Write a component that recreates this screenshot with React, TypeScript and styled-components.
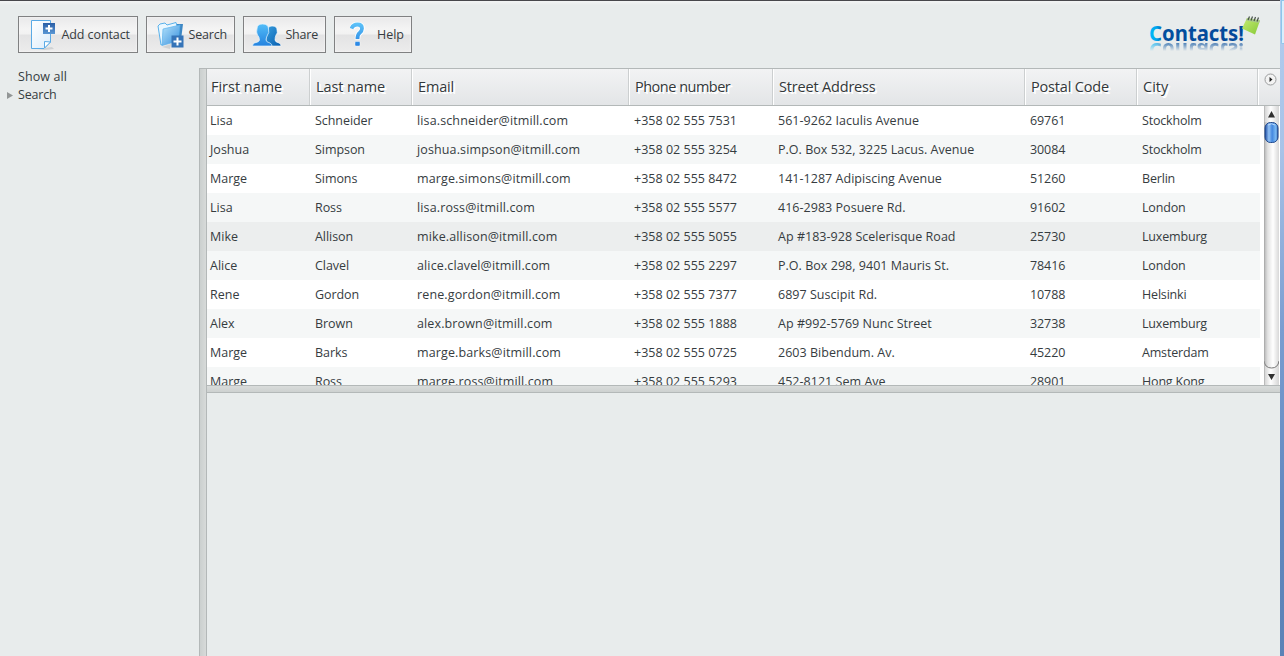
import React from 'react';
import styled, { createGlobalStyle } from 'styled-components';

const Global = createGlobalStyle`
  * { box-sizing: border-box; }
  html, body { margin: 0; padding: 0; overflow: hidden; }
  body { font-family: "Trebuchet MS", "Open Sans", "Noto Sans", sans-serif; font-size: 12.5px; color: #363c3f; }
`;

const Window = styled.div`
  display: flex;
  width: 1284px;
  height: 656px;
  overflow: hidden;
  background: #e8ecec;
`;
const Main = styled.div`
  display: flex;
  flex-direction: column;
  width: 1280px;
  border-top: 1px solid #47474b;
`;
const Desktop = styled.div`
  display: flex;
  flex-direction: column;
  width: 4px;
  background: linear-gradient(#b3cdee 0, #a9c3e8 150px, #7a9dd0 330px, #6289c0 500px, #5b82b6 656px);
`;
const DesktopWindow = styled.div`
  width: 3px;
  height: 44px;
  margin-left: 1px;
  border: 1px solid #8dc5ea;
  border-right: 0;
  border-radius: 0 0 0 2px;
  background: #d9effd;
`;

const Toolbar = styled.header`
  display: flex;
  justify-content: space-between;
  height: 67px;
  padding: 15px 18px 0 18px;
  background: linear-gradient(#f2f4f4 0, #e8ecec 4px);
`;
const Actions = styled.div`
  display: flex;
  gap: 8px;
`;
const Button = styled.button<{ $w: number; $pad: number }>`
  display: flex;
  align-items: center;
  justify-content: space-between;
  width: ${p => p.$w}px;
  height: 37px;
  padding: 0 7px 0 ${p => p.$pad}px;
  border: 1px solid #808182;
  border-radius: 0;
  background: linear-gradient(#e9e9ea 0, #f4f4f4 12px, #f2f2f2 17px, #e3e3e4 18px, #ececec 100%);
  box-shadow: inset 0 0 2px #fff;
  font: inherit;
  color: #363c3f;
  svg { display: block; flex: none; }
`;
const Label = styled.span<{ $ls: number }>`
  letter-spacing: ${p => p.$ls}px;
  white-space: nowrap;
`;
const Logo = styled.svg`
  display: block;
  width: 116px;
  height: 44px;
  margin-top: -3px;
`;

const Workspace = styled.div`
  display: flex;
  flex: 1;
  min-height: 0;
`;
const Sidebar = styled.nav`
  width: 199px;
`;
const TreeItem = styled.div`
  display: flex;
  align-items: center;
  height: 18px;
  line-height: 18px;
`;
const Twist = styled.span`
  display: flex;
  width: 18px;
  padding: 1px 0 0 7px;
`;
const VSplit = styled.div`
  width: 8px;
  border: 1px solid #b3b8b8;
  border-bottom: 0;
  background: linear-gradient(90deg, #cbd0cf, #d7dad9);
`;
const Content = styled.main`
  display: flex;
  flex-direction: column;
  width: 1073px;
  border-top: 1px solid #b3b8b8;
`;
const Table = styled.section`
  display: flex;
  flex-direction: column;
  height: 316px;
  background: #fff;
  overflow: hidden;
`;
const HeadRow = styled.div`
  display: flex;
  flex: none;
  height: 37px;
  border-bottom: 1px solid #b3b8b8;
  background: linear-gradient(#f2f3f4, #e3e5e7);
`;
const HeadCell = styled.div<{ $w: number; $first: boolean; $ls: number }>`
  width: ${p => p.$w}px;
  padding-left: ${p => (p.$first ? 4 : 5)}px;
  border-left: ${p => (p.$first ? 0 : 1)}px solid #fff;
  border-right: 1px solid #cccfd0;
  font-size: 14.5px;
  line-height: 36px;
  letter-spacing: ${p => p.$ls}px;
  color: #33383a;
  text-shadow: 1px 1px 0 #fff, 2px 2px 0 #fff;
  white-space: nowrap;
`;
const Selector = styled.div`
  flex: 1;
  padding: 4px 0 0 5px;
  border-left: 1px solid #fff;
`;
const Body = styled.div`
  display: flex;
  justify-content: space-between;
  height: 279px;
`;
const Rows = styled.div`
  width: 1053px;
  overflow: hidden;
`;
const Row = styled.div<{ $bg: string }>`
  display: flex;
  height: 29px;
  line-height: 29px;
  background: ${p => p.$bg};
`;
const Cell = styled.div<{ $w: number; $first: boolean; $ls: number }>`
  flex: none;
  width: ${p => p.$w}px;
  padding-left: ${p => (p.$first ? 3 : 5)}px;
  letter-spacing: ${p => p.$ls}px;
  white-space: nowrap;
`;
const ScrollBar = styled.svg`
  display: block;
  flex: none;
  margin-right: 1px;
`;
const HSplit = styled.div`
  height: 8px;
  border: 1px solid #b3b8b8;
  border-width: 1px 0;
  background: linear-gradient(#d9dcdb, #cdd1d0);
`;

const columns = [
  { name: 'First name', w: 103, ls: 0, hls: -0.02 },
  { name: 'Last name', w: 102, ls: -0.06, hls: -0.1 },
  { name: 'Email', w: 217, ls: 0.13, hls: -0.15 },
  { name: 'Phone number', w: 144, ls: 0.02, hls: -0.5 },
  { name: 'Street Address', w: 252, ls: 0.03, hls: -0.18 },
  { name: 'Postal Code', w: 112, ls: -0.1, hls: -0.18 },
  { name: 'City', w: 121, ls: -0.18, hls: 0 },
];

const contacts = [
  ['Lisa', 'Schneider', 'lisa.schneider@itmill.com', '+358 02 555 7531', '561-9262 Iaculis Avenue', '69761', 'Stockholm'],
  ['Joshua', 'Simpson', 'joshua.simpson@itmill.com', '+358 02 555 3254', 'P.O. Box 532, 3225 Lacus. Avenue', '30084', 'Stockholm'],
  ['Marge', 'Simons', 'marge.simons@itmill.com', '+358 02 555 8472', '141-1287 Adipiscing Avenue', '51260', 'Berlin'],
  ['Lisa', 'Ross', 'lisa.ross@itmill.com', '+358 02 555 5577', '416-2983 Posuere Rd.', '91602', 'London'],
  ['Mike', 'Allison', 'mike.allison@itmill.com', '+358 02 555 5055', 'Ap #183-928 Scelerisque Road', '25730', 'Luxemburg'],
  ['Alice', 'Clavel', 'alice.clavel@itmill.com', '+358 02 555 2297', 'P.O. Box 298, 9401 Mauris St.', '78416', 'London'],
  ['Rene', 'Gordon', 'rene.gordon@itmill.com', '+358 02 555 7377', '6897 Suscipit Rd.', '10788', 'Helsinki'],
  ['Alex', 'Brown', 'alex.brown@itmill.com', '+358 02 555 1888', 'Ap #992-5769 Nunc Street', '32738', 'Luxemburg'],
  ['Marge', 'Barks', 'marge.barks@itmill.com', '+358 02 555 0725', '2603 Bibendum. Av.', '45220', 'Amsterdam'],
  ['Marge', 'Ross', 'marge.ross@itmill.com', '+358 02 555 5293', '452-8121 Sem Ave', '28901', 'Hong Kong'],
];
const HOVERED = 4;
const rowColor = (i: number) => (i === HOVERED ? '#eceeee' : i % 2 ? '#f5f7f7' : '#fff');

const AddIcon = () => (
  <svg width="28" height="32" viewBox="0 0 28 32">
    <defs>
      <linearGradient id="page" x1="0" y1="0" x2="1" y2="1"><stop offset="0" stopColor="#fff" /><stop offset="1" stopColor="#dcecfa" /></linearGradient>
      <linearGradient id="plus" x1="0" y1="0" x2="0" y2="1"><stop offset="0" stopColor="#2a5ea6" /><stop offset="1" stopColor="#5a97d4" /></linearGradient>
    </defs>
    <path d="M8 30 L23 28 L25 30 L15 31 Z" fill="#cfd2d4" />
    <path d="M2.500 1.500 H21.500 V23 L15 29.500 H2.500 Z" fill="url(#page)" stroke="#5aaae6" />
    <path d="M15.500 29 V22.500 L21.500 23 Z" fill="#fff" stroke="#5aaae6" />
    <rect x="14" y="4" width="12" height="11" fill="url(#plus)" />
    <path d="M20 6 V13 M16.500 9.500 H23.500" stroke="#fff" strokeWidth="2" />
  </svg>
);

const FolderIcon = () => (
  <svg width="30" height="30" viewBox="0 0 30 30">
    <defs>
      <linearGradient id="folder" x1="0" y1="0" x2="1" y2="1"><stop offset="0" stopColor="#b4e3fc" /><stop offset="1" stopColor="#368edc" /></linearGradient>
    </defs>
    <path d="M6 27 L15 24 L14 29 Z" fill="#cfd2d4" />
    <path d="M21 4 L27 4 L25 20 L19 20 Z" fill="#3d87c4" />
    <path d="M2 6 L4 4 L9 3 L11 5 L20 2.500 L21.500 8 L20 20 L5 25 Z" fill="#e9f7ff" stroke="#59b1eb" />
    <path d="M7 9 L24 5 L22 21 L6 25.500 Z" fill="url(#folder)" stroke="#5bb2ec" strokeWidth=".7" />
    <rect x="15.500" y="15.500" width="12" height="12" fill="#3574b8" />
    <path d="M21.500 17.500 V25.500 M17.500 21.500 H25.500" stroke="#fff" strokeWidth="2" />
  </svg>
);

const ShareIcon = () => (
  <svg width="31" height="26" viewBox="0 0 31 26">
    <defs>
      <linearGradient id="front" x1="0" y1="0" x2="0" y2="1"><stop offset="0" stopColor="#52bdf8" /><stop offset="1" stopColor="#2482df" /></linearGradient>
      <linearGradient id="back" x1="0" y1="0" x2="1" y2="1"><stop offset="0" stopColor="#389ddd" /><stop offset="1" stopColor="#075eb0" /></linearGradient>
    </defs>
    <path d="M16 7 Q16 4 20 4 Q25 4 25 8 Q26 11 24 13 Q23 15 23 18 Q23 20 27 21 Q29 22 29 24 H14 V16 Z" fill="url(#back)" stroke="#fff" strokeWidth=".6" />
    <path d="M5 7 Q5 2 10.500 2 Q16.500 2 16.500 7 Q17.500 11 15.500 13 Q14 16 14 18 Q14 20 18 21 Q20 22 20 24 H0.500 Q.5 22 2.500 21 Q7.500 20 7.500 18 Q7.500 15 5.500 13 Q4 10 5 7 Z" fill="url(#front)" stroke="#e2f4ff" strokeWidth=".7" />
  </svg>
);

const HelpIcon = () => (
  <svg width="16" height="28" viewBox="0 0 16 28">
    <defs>
      <linearGradient id="help" x1="0" y1="0" x2="0" y2="26" gradientUnits="userSpaceOnUse"><stop offset="0" stopColor="#62c8fa" /><stop offset="1" stopColor="#2580e2" /></linearGradient>
    </defs>
    <path d="M2 7.500 Q3 3.500 7.500 3.500 Q12 3.500 12 7.500 Q12 10 9.500 12 Q7.500 13.500 7.500 18.500" fill="none" stroke="#fff" strokeWidth="5.500" />
    <path d="M1.500 7.500 Q3 3.500 7.500 3.500 Q12 3.500 12 7.500 Q12 10 9.500 12 Q7.500 13.500 7.500 18" fill="none" stroke="url(#help)" strokeWidth="3.800" />
    <rect x="5" y="20.500" width="5" height="4.500" rx="1" fill="url(#help)" stroke="#fff" strokeWidth=".4" />
  </svg>
);

const wordmark = {
  x: 3,
  fontFamily: "'Noto Sans', 'DejaVu Sans', sans-serif",
  fontWeight: 700,
  fontSize: 21,
  textLength: 95,
  lengthAdjust: 'spacingAndGlyphs',
  fill: 'url(#word)',
} as const;

const ContactsLogo = () => (
  <Logo viewBox="0 0 116 44">
    <defs>
      <linearGradient id="word" x1="3" x2="99" y1="0" y2="0" gradientUnits="userSpaceOnUse">
        <stop offset="0" stopColor="#00bcfa" /><stop offset=".08" stopColor="#00a5ec" /><stop offset=".15" stopColor="#024f9f" /><stop offset="1" stopColor="#03489a" />
      </linearGradient>
      <linearGradient id="fade" x1="0" x2="0" y1="29" y2="38" gradientUnits="userSpaceOnUse">
        <stop offset="0" stopColor="#fff" stopOpacity=".75" /><stop offset="1" stopColor="#fff" stopOpacity="0" />
      </linearGradient>
      <mask id="mirror" maskUnits="userSpaceOnUse" x="0" y="29" width="116" height="11"><rect x="0" y="29" width="116" height="10" fill="url(#fade)" /></mask>
      <linearGradient id="note" x1="0" y1="0" x2="1" y2="1"><stop offset="0" stopColor="#c6ec74" /><stop offset="1" stopColor="#86c936" /></linearGradient>
    </defs>
    <text y="28" {...wordmark}>Contacts!</text>
    <g mask="url(#mirror)" aria-hidden="true">
      <text transform="translate(0 57.500) scale(1 -1)" y="28" {...wordmark}>Contacts!</text>
    </g>
    <path d="M101 5 L114 7.500 L109 21.500 L96 15.500 Z" fill="url(#note)" />
    <path d="M101 5 L114 7.500 L113 10 L100 7.500 Z" fill="#a9c98a" />
    <path d="M102 7 L103.500 3.500 M105 7.500 L106.500 3.500 M108 8 L109.500 4 M111 8.500 L112.500 4.500" stroke="#465047" strokeWidth="1.200" />
  </Logo>
);

const Scroll = () => (
  <ScrollBar width="15" height="279" viewBox="0 0 15 279">
    <defs>
      <linearGradient id="track"><stop offset="0" stopColor="#b2b2b2" /><stop offset=".25" stopColor="#e2e2e2" /><stop offset=".6" stopColor="#fff" /><stop offset="1" stopColor="#d8d8d8" /></linearGradient>
      <linearGradient id="cap"><stop offset="0" stopColor="#cfcfcf" /><stop offset=".45" stopColor="#fff" /><stop offset="1" stopColor="#d5d5d5" /></linearGradient>
      <linearGradient id="thumb"><stop offset="0" stopColor="#1b4aa2" /><stop offset=".3" stopColor="#94c3f5" /><stop offset=".55" stopColor="#4387df" /><stop offset=".85" stopColor="#7dbcf4" /><stop offset="1" stopColor="#214f9f" /></linearGradient>
    </defs>
    <rect width="15" height="279" fill="url(#track)" />
    <rect width="15" height="16" fill="url(#cap)" />
    <path d="M0 255 Q1 262 7.500 262 Q14 262 15 255 V279 H0 Z" fill="url(#cap)" />
    <path d="M0 255 Q1 262 7.500 262 Q14 262 15 255" fill="none" stroke="#777" />
    <path d="M0 0 V279" stroke="#a4a4a4" />
    <path d="M7.500 5 L11 11.500 H4 Z M7.500 274 L11 268 H4 Z" fill="#303030" />
    <rect x="1" y="16.500" width="13" height="20" rx="5.500" fill="url(#thumb)" stroke="#234a8d" />
    <path d="M4 19 Q7.500 16.500 11 19" stroke="#bbd9fa" fill="none" />
  </ScrollBar>
);

export default function App() {
  return (
    <>
      <Global />
      <Window>
        <Main>
          <Toolbar>
            <Actions>
              <Button $w={120} $pad={10}><AddIcon /><Label $ls={-0.08}>Add contact</Label></Button>
              <Button $w={89} $pad={9}><FolderIcon /><Label $ls={-0.2}>Search</Label></Button>
              <Button $w={83} $pad={8}><ShareIcon /><Label $ls={-0.2}>Share</Label></Button>
              <Button $w={78} $pad={15}><HelpIcon /><Label $ls={0}>Help</Label></Button>
            </Actions>
            <ContactsLogo />
          </Toolbar>
          <Workspace>
            <Sidebar>
              <TreeItem><Twist /><Label $ls={0.1}>Show all</Label></TreeItem>
              <TreeItem>
                <Twist><svg width="6" height="7"><path d="M0 0 L6 3.500 L0 7 Z" fill="#929696" /></svg></Twist>
                <Label $ls={-0.2}>Search</Label>
              </TreeItem>
            </Sidebar>
            <VSplit />
            <Content>
              <Table>
                <HeadRow>
                  {columns.map((c, i) => (
                    <HeadCell key={c.name} $w={c.w} $first={i === 0} $ls={c.hls}>{c.name}</HeadCell>
                  ))}
                  <Selector>
                    <svg width="13" height="13" viewBox="0 0 13 13">
                      <circle cx="6.500" cy="6.500" r="5.500" fill="#f3f3f3" stroke="#9b9d9e" />
                      <path d="M5.500 4 L8.500 6.500 L5.500 9 Z" fill="#222" />
                    </svg>
                  </Selector>
                </HeadRow>
                <Body>
                  <Rows>
                    {contacts.map((r, i) => (
                      <Row key={i} $bg={rowColor(i)}>
                        {r.map((v, j) => (
                          <Cell key={j} $w={columns[j].w} $first={j === 0} $ls={columns[j].ls}>{v}</Cell>
                        ))}
                      </Row>
                    ))}
                  </Rows>
                  <Scroll />
                </Body>
              </Table>
              <HSplit />
            </Content>
          </Workspace>
        </Main>
        <Desktop><DesktopWindow /></Desktop>
      </Window>
    </>
  );
}
